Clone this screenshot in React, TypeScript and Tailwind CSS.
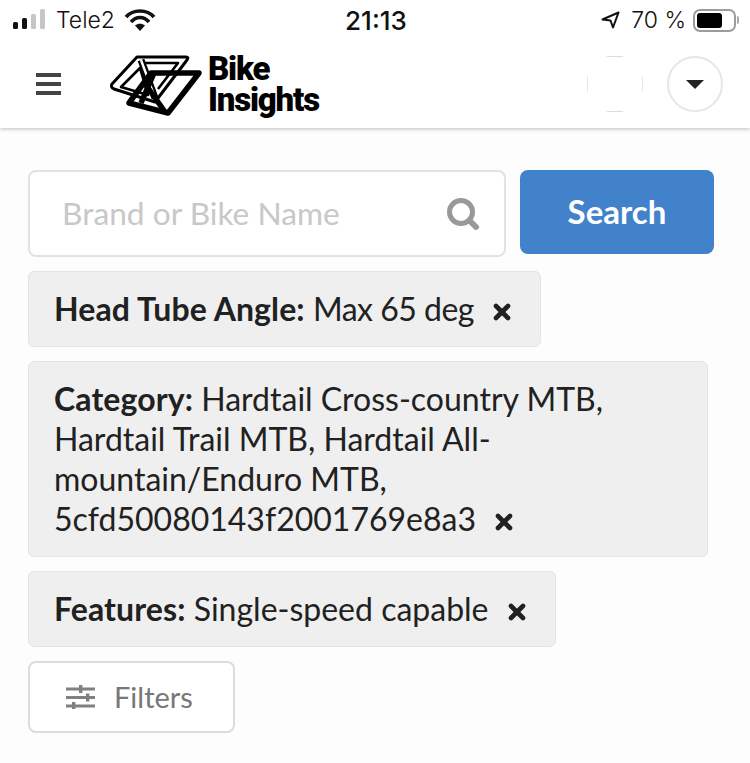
import { X } from "lucide-react";

const Chip = ({ label, value, wide, pr, tight }: { label: string; value: string; wide?: boolean; pr?: string; tight?: boolean }) => (
  <div
    className={`rounded-[6px] border border-[#e4e4e4] bg-[#efefef] pl-[25px] py-[17px] text-[32px] leading-[40px] text-[#212121] ${
      wide ? "w-[680px] pr-[20px]" : `w-fit ${pr}`
    }`}
  >
    <span className="font-bold tracking-[0.1px]">{label}:</span>{" "}
    <span className={tight ? "tracking-[-0.5px]" : ""}>{value}</span>
    <X className="inline-block ml-[16px] mb-[1px] w-[24px] h-[24px] text-[#212121]" strokeWidth={4.6} />
  </div>
);

const Logo = () => (
  <svg viewBox="0 0 96 64" className="w-[96px] h-[64px] shrink-0" fill="none">
    <path d="M29 5 L78 5 Q81 5 79 8 L47 50 L6 37 Q2 35 4 32 Z" stroke="#000" strokeWidth="3" strokeLinejoin="round" />
    <path d="M34 11 L70 11 L50 37" stroke="#000" strokeWidth="2.6" strokeLinejoin="round" />
    <path d="M32 16 L13 35 L40 43 Z" stroke="#000" strokeWidth="2.6" strokeLinejoin="round" />
    <path d="M33 8 L47 46" stroke="#000" strokeWidth="7" />
    <path d="M33 8 L47 46" stroke="#fff" strokeWidth="2.4" />
    <path d="M43 21 L91 21 L60 61 L21 51 Z" stroke="#000" strokeWidth="5.5" strokeLinejoin="round" />
    <path d="M46 21 L33 51" stroke="#000" strokeWidth="5.5" />
    <path d="M38 33 L57 60" stroke="#000" strokeWidth="5.5" />
  </svg>
);

const SearchGlyph = () => (
  <svg width="34" height="34" viewBox="0 0 34 34" fill="none" className="shrink-0">
    <circle cx="15" cy="15" r="11.5" stroke="#999" strokeWidth="5" />
    <path d="M23.5 23.5 L30 30" stroke="#999" strokeWidth="6" strokeLinecap="round" />
  </svg>
);

const FilterGlyph = () => (
  <svg width="29" height="24" viewBox="0 0 29 24" fill="#808080" className="mr-[19px] shrink-0">
    <rect x="0" y="2.5" width="29" height="3" />
    <rect x="0" y="11" width="29" height="3" />
    <rect x="0" y="19.5" width="29" height="3" />
    <rect x="13" y="0" width="3.4" height="8" />
    <rect x="20" y="8.5" width="3.4" height="8" />
    <rect x="6" y="17" width="3.4" height="7" />
  </svg>
);

export default function App() {
  return (
    <div
      className="h-[763px] w-[750px] overflow-hidden bg-[#fdfdfd] text-[#212121]"
      style={{ fontFamily: "Lato, sans-serif" }}
    >
      {/* Status bar */}
      <div
        className="relative z-10 flex h-[40px] items-center justify-between bg-white pl-[13px] pr-[11px] text-[23px] text-[#111]"
        style={{ fontFamily: "Inter, sans-serif" }}
      >
        <div className="flex w-[270px] items-center">
          <svg width="33" height="22" viewBox="0 0 33 22" className="mr-[10px]">
            <rect x="0" y="13" width="5" height="7" rx="1.5" fill="#111" />
            <rect x="9" y="9" width="5" height="11" rx="1.5" fill="#111" />
            <rect x="18" y="5" width="5" height="15" rx="1.5" fill="#c6c6c6" />
            <rect x="27" y="0" width="5" height="20" rx="1.5" fill="#c6c6c6" />
          </svg>
          <span className="font-light">Tele2</span>
          <svg width="32" height="24" viewBox="0 0 32 24" className="ml-[9px]">
            <path d="M2 9 C9 1 23 1 30 9" stroke="#111" strokeWidth="3.6" fill="none" />
            <path d="M7 14 C12 8 20 8 25 14" stroke="#111" strokeWidth="3.6" fill="none" />
            <path d="M11 17.5 C14 15 18 15 21 17.5 L16 23 Z" fill="#111" />
          </svg>
        </div>
        <span className="text-[26px] font-medium">21:13</span>
        <div className="flex w-[270px] items-center justify-end">
          <svg width="19" height="18" viewBox="0 0 19 18" className="mr-[11px]">
            <path d="M1.5 8.5 L17.5 1.5 L12 16.5 L9.5 9.5 Z" stroke="#111" strokeWidth="2" fill="none" strokeLinejoin="round" />
          </svg>
          <span className="font-light">70 %</span>
          <div className="ml-[7px] flex h-[23px] w-[43px] items-center rounded-[7px] border-2 border-[#9c9c9c] p-[2px]">
            <div className="h-full w-[25px] rounded-[3px] bg-black" />
          </div>
          <div className="ml-[1px] h-[8px] w-[2px] rounded-r-full bg-[#aaa]" />
        </div>
      </div>

      {/* Nav */}
      <div className="flex h-[88px] items-center bg-white pl-[36px] pr-[27px] shadow-[0_1px_4px_rgba(0,0,0,0.25)]">
        <div className="flex w-[25px] flex-col gap-[5px]">
          <div className="h-[4px] bg-[#444]" />
          <div className="h-[4px] bg-[#444]" />
          <div className="h-[4px] bg-[#444]" />
        </div>
        <div className="ml-[47px] flex items-center">
          <Logo />
          <div
            className="ml-[4px] text-[33px] font-black leading-[31px] tracking-[-1.2px] text-black"
            style={{ fontFamily: "Roboto, sans-serif" }}
          >
            Bike
            <br />
            Insights
          </div>
        </div>
        <div className="ml-auto flex items-center gap-[24px]">
          <div className="relative h-[56px] w-[56px] rounded-full bg-white">
            <span className="absolute left-[20px] top-0 h-px w-[16px] bg-[#ddd]" />
            <span className="absolute bottom-0 left-[20px] h-px w-[16px] bg-[#ddd]" />
            <span className="absolute left-0 top-[20px] h-[16px] w-px bg-[#e6e6e6]" />
            <span className="absolute right-0 top-[20px] h-[16px] w-px bg-[#e6e6e6]" />
          </div>
          <div className="flex h-[56px] w-[56px] items-center justify-center rounded-full border-2 border-[#e6e6e6]">
            <div className="mt-[1px] h-0 w-0 border-x-[9px] border-t-[9px] border-x-transparent border-t-[#222]" />
          </div>
        </div>
      </div>

      {/* Content */}
      <div className="flex flex-col items-start gap-[14px] pl-[28px] pt-[42px]">
        <div className="flex items-start gap-[14px]">
          <div className="flex h-[87px] w-[478px] items-center justify-between rounded-[8px] border-2 border-[#e2e2e2] bg-white pl-[32px] pr-[24px] text-[31.7px] text-[#c8c8c8]">
            <span>Brand or Bike Name</span>
            <SearchGlyph />
          </div>
          <button className="h-[84px] w-[194px] rounded-[8px] bg-[#4282cb] text-[33px] font-bold text-white">
            Search
          </button>
        </div>
        <Chip tight label="Head Tube Angle" value="Max 65 deg" pr="pr-[26px]" />
        <Chip
          wide
          label="Category"
          value="Hardtail Cross-country MTB, Hardtail Trail MTB, Hardtail All-mountain/Enduro MTB, 5cfd50080143f2001769e8a3"
        />
        <Chip label="Features" value="Single-speed capable" pr="pr-[26px]" />
        <button className="flex h-[72px] w-[207px] items-center rounded-[8px] border-2 border-[#dcdcdc] bg-white pl-[36px] text-[29px] text-[#777]">
          <FilterGlyph />
          Filters
        </button>
      </div>
    </div>
  );
}
